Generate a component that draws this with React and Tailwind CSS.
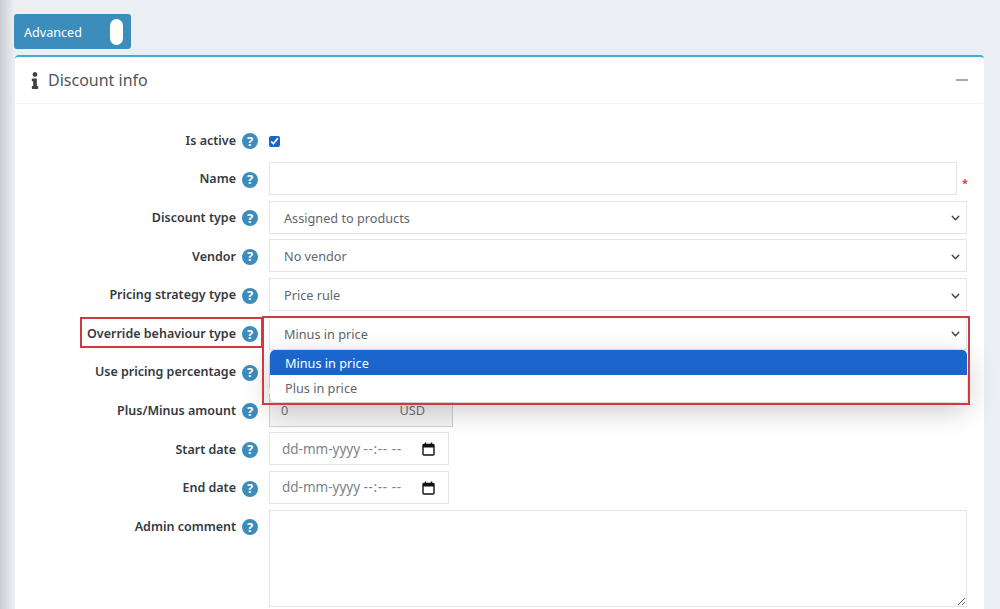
import React from "react";
import { FaInfo } from "react-icons/fa";

const Help = () => (
  <span className="ml-[6px] flex h-4 w-4 shrink-0 items-center justify-center rounded-full bg-[#3c8dbc] text-[13px] font-bold leading-none text-white">?</span>
);

const Chevron = () => (
  <svg width="9" height="6" viewBox="0 0 16 11" fill="none" stroke="#3d4349" strokeWidth="2.6" strokeLinecap="round" strokeLinejoin="round">
    <path d="M2 2.5l6 6 6-6" />
  </svg>
);

const Calendar = () => (
  <svg width="13" height="14" viewBox="0 0 13 14" fill="none" stroke="#111" strokeWidth="1.4">
    <rect x="1" y="2.5" width="11" height="10.5" rx="1" />
    <path d="M1 4.2h11" strokeWidth="2.6" />
    <path d="M3.5 0.5v2M9.5 0.5v2" />
  </svg>
);

const Row = ({ label, height = "h-[33px]", children }) => (
  <div className={`mb-[5.6px] flex ${height}`}>
    <div className="flex h-[33px] w-[243px] shrink-0 items-center justify-end pt-[2px]">
      <span className="text-[12.5px] font-semibold text-[#343a40]">{label}</span>
      <Help />
    </div>
    <div className="ml-[11px] flex min-w-0 flex-1">{children}</div>
  </div>
);

const Select = ({ value }) => (
  <div className="flex h-full w-[698px] items-center justify-between border border-[#e2e5e8] bg-white pl-[14px] pr-[6px] pt-[2px] text-[12.7px] text-[#5f666d]">
    <span>{value}</span>
    <Chevron />
  </div>
);

const DateField = () => (
  <div className="flex h-full w-[180px] items-center justify-between border border-[#e2e5e8] bg-white pl-[12px] pr-[13px] text-[13.5px] text-[#7b8288]">
    <span>dd-mm-yyyy <span className="tracking-[0.6px]">--:-- --</span></span>
    <Calendar />
  </div>
);

export default function App() {
  return (
    <div className="relative flex h-[609px] w-[1000px] overflow-hidden bg-[#ebeef3] font-['Noto_Sans',sans-serif]">
      <div className="w-[14px] shrink-0 bg-gradient-to-r from-[#c9ccd0] to-[#ebeef3]" />
      <main className="flex w-[970px] shrink-0 flex-col">
        <div className="mt-[14px] flex h-[35px] w-[117px] shrink-0 items-center justify-between rounded-[3px] bg-[#3c8dbc] pl-[10px] pr-[8px] text-[12.6px] text-white">
          <span className="pt-[3px]">Advanced</span>
          <span className="h-[26px] w-[13px] rounded-full bg-white" />
        </div>
        <section className="ml-px mt-[6px] flex-1 shrink-0 rounded-t-[4px] border-t-2 border-[#3fb0c9] bg-white">
          <header className="flex h-[47px] items-center justify-between border-b border-[#f3f4f6] pl-[15px] pr-[16px]">
            <div className="flex items-center text-[#50565c]">
              <FaInfo className="h-[17px] w-[10px] text-[#3f4347]" />
              <h2 className="ml-[8px] text-[16px]">Discount info</h2>
            </div>
            <span className="h-[1.5px] w-[12px] bg-[#a9adb1]" />
          </header>
          <form className="pt-[19.7px]">
            <Row label="Is active">
              <span className="flex h-full items-center pt-[2px]">
                <input type="checkbox" defaultChecked className="h-[11px] w-[11px] accent-[#1a66cc]" />
              </span>
            </Row>
            <Row label="Name">
              <div className="h-full w-[688px] border border-[#e2e5e8] bg-white" />
              <span className="ml-[5px] mt-[15px] text-[11px] font-bold leading-none text-[#d9394a]">*</span>
            </Row>
            <Row label="Discount type"><Select value="Assigned to products" /></Row>
            <Row label="Vendor"><Select value="No vendor" /></Row>
            <Row label="Pricing strategy type"><Select value="Price rule" /></Row>
            <Row label="Override behaviour type"><Select value="Minus in price" /></Row>
            <Row label="Use pricing percentage">
              <div className="h-full w-[184px] border border-[#dcdfe2] bg-white" />
            </Row>
            <Row label="Plus/Minus amount">
              <div className="flex h-full w-[184px] items-center justify-between border border-[#cfd2d5] bg-[#f4f4f5] pl-[11px] pr-[27px] text-[12.7px] text-[#6c7278]">
                <span>0</span>
                <span>USD</span>
              </div>
            </Row>
            <Row label="Start date"><DateField /></Row>
            <Row label="End date"><DateField /></Row>
            <Row label="Admin comment" height="h-[97px]">
              <textarea className="h-full w-[698px] border border-[#e2e5e8] bg-white" />
            </Row>
          </form>
        </section>
      </main>

      <div className="absolute left-[270px] top-[350px] w-[697px] overflow-hidden rounded-[5px] bg-white text-[12.7px] text-[#5f666d] shadow-[0_8px_28px_rgba(0,0,0,0.22)]">
        <div className="flex h-[25px] items-center bg-[#1a66cc] pl-[15px] pt-[2px] text-white">Minus in price</div>
        <div className="flex h-[27px] items-center pl-[15px]">Plus in price</div>
      </div>
      <div className="absolute left-[80px] top-[317px] h-[31px] w-[183px] border-2 border-[#cf3a40]" />
      <div className="absolute left-[262px] top-[316px] h-[89px] w-[708px] border-2 border-[#cf3a40]" />
    </div>
  );
}
